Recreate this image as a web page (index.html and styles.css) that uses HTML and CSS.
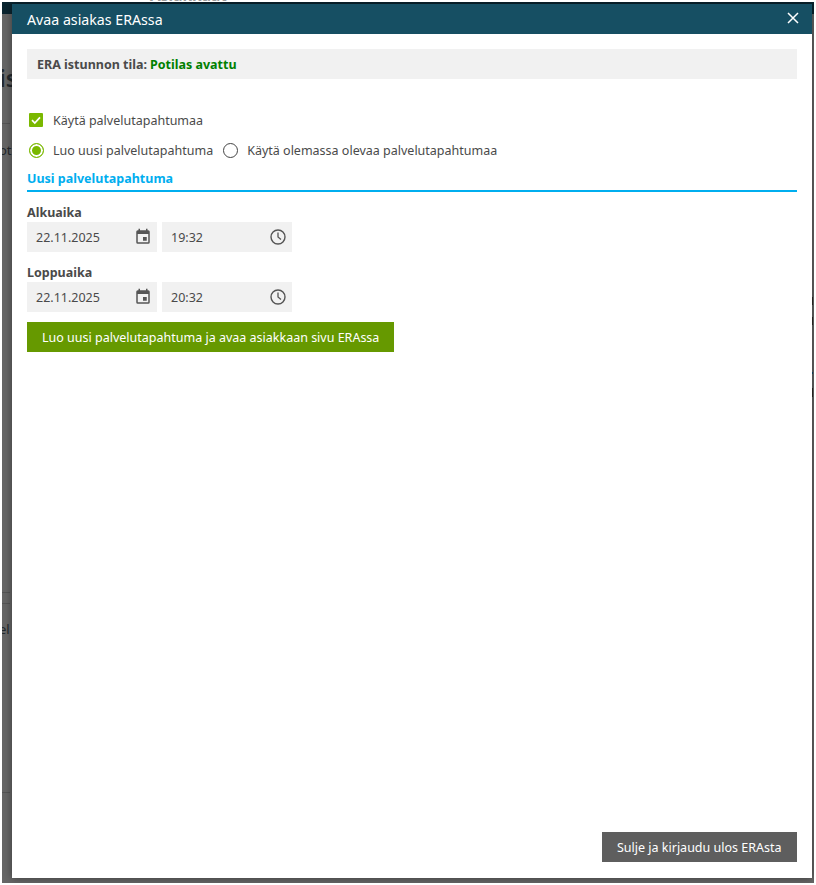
FILE: index.html
```html
<!DOCTYPE html>
<html lang="fi">
<head>
<meta charset="utf-8">
<title>Avaa asiakas ERAssa</title>
<link rel="stylesheet" href="styles.css">
</head>
<body>
<span class="ghost ghost-top">Asiakkaat</span>
<div class="backdrop">
  <div class="topbar"></div>
  <span class="ghost ghost-is">is</span>
  <span class="ghost ghost-ot">ot</span>
  <span class="ghost ghost-el">el</span>
  <i class="rule rule-a"></i><i class="rule rule-b"></i><i class="rule rule-c"></i><i class="rule rule-d"></i>
  <i class="mark mark-a"></i><i class="mark mark-b"></i><i class="mark mark-c"></i><i class="mark mark-d"></i>
  <section class="dialog">
    <header class="dialog-head">
      <h1 class="dialog-title">Avaa asiakas ERAssa</h1>
      <svg class="close" width="12" height="12" viewBox="0 0 12 12"><path d="M1 1l10 10M11 1L1 11" stroke="#fff" stroke-width="1.5" fill="none"/></svg>
    </header>
    <div class="dialog-body">
      <div class="status"><b>ERA istunnon tila:</b> <b class="ok">Potilas avattu</b></div>
      <div class="option-row first">
        <span class="check"><svg width="14" height="14" viewBox="0 0 14 14"><path d="M3 7.2l2.8 2.8L11 4.4" stroke="#fff" stroke-width="1.7" fill="none"/></svg></span>
        <span>Käytä palvelutapahtumaa</span>
      </div>
      <div class="option-row">
        <span class="radio on"></span><span class="radio-label">Luo uusi palvelutapahtuma</span>
        <span class="radio"></span><span>Käytä olemassa olevaa palvelutapahtumaa</span>
      </div>
      <h2 class="section">Uusi palvelutapahtuma</h2>
      <div class="field-label">Alkuaika</div>
      <div class="pickers">
        <div class="input"><span>22.11.2025</span>
          <svg class="ico" width="18" height="18" viewBox="0 0 24 24"><path fill="#555" d="M19 3h-1V1h-2v2H8V1H6v2H5a2 2 0 0 0-2 2v14a2 2 0 0 0 2 2h14a2 2 0 0 0 2-2V5a2 2 0 0 0-2-2zm0 16H5V8h14zM12 12h5v5h-5z"/></svg></div>
        <div class="input"><span>19:32</span>
          <svg class="ico" width="18" height="18" viewBox="0 0 18 18"><circle cx="9" cy="9" r="7" fill="none" stroke="#555" stroke-width="1.4"/><path d="M9 4.6V9l3 2.4" fill="none" stroke="#555" stroke-width="1.3"/></svg></div>
      </div>
      <div class="field-label second">Loppuaika</div>
      <div class="pickers">
        <div class="input"><span>22.11.2025</span>
          <svg class="ico" width="18" height="18" viewBox="0 0 24 24"><path fill="#555" d="M19 3h-1V1h-2v2H8V1H6v2H5a2 2 0 0 0-2 2v14a2 2 0 0 0 2 2h14a2 2 0 0 0 2-2V5a2 2 0 0 0-2-2zm0 16H5V8h14zM12 12h5v5h-5z"/></svg></div>
        <div class="input"><span>20:32</span>
          <svg class="ico" width="18" height="18" viewBox="0 0 18 18"><circle cx="9" cy="9" r="7" fill="none" stroke="#555" stroke-width="1.4"/><path d="M9 4.6V9l3 2.4" fill="none" stroke="#555" stroke-width="1.3"/></svg></div>
      </div>
      <button class="btn primary">Luo uusi palvelutapahtuma ja avaa asiakkaan sivu ERAssa</button>
      <div class="footer"><button class="btn secondary">Sulje ja kirjaudu ulos ERAsta</button></div>
    </div>
  </section>
</div>
</body>
</html>
```
FILE: styles.css
```css
* { box-sizing: border-box; }
html, body { margin: 0; height: 100%; background: #fff; overflow: hidden; }
body { font-family: "Noto Sans", "Open Sans", sans-serif; color: #4a4a4a; font-size: 12.5px; }
.backdrop { position: absolute; left: 2px; top: 2px; width: 812px; height: 881px; background: #666; overflow: hidden; }
.topbar { height: 12px; background: #0a2530; }
.ghost { position: absolute; color: #23282c; font-weight: 600; white-space: nowrap; }
.ghost-top { left: 150px; top: -14px; color: #9a9a9a; font-size: 15.5px; font-weight: 700; line-height: 18px; }
.ghost-is { left: -3px; top: 60px; font-size: 24px; line-height: 32px; }
.ghost-ot { left: -3px; top: 139px; font-size: 13px; font-weight: 400; line-height: 18px; }
.ghost-el { left: -3px; top: 618px; font-size: 13px; font-weight: 400; line-height: 18px; }
.rule { position: absolute; left: 0; width: 8px; height: 1px; background: #555; }
.rule-a { top: 121px; }
.rule-b { top: 590px; }
.rule-c { top: 601px; }
.rule-d { top: 790px; }
.mark { position: absolute; left: 810px; width: 1px; background: #2e2a26; }
.mark-a { top: 295px; height: 8px; }
.mark-b { top: 315px; height: 8px; }
.mark-c { top: 370px; height: 2px; background: #0f4a6b; }
.mark-d { top: 386px; height: 9px; }
.dialog { position: absolute; left: 10px; top: 2px; width: 800px; height: 874px; background: #fff; display: flex; flex-direction: column; box-shadow: 0 0 8px rgba(0, 0, 0, .45); }
.dialog-head { height: 30px; flex: none; background: #164f63; color: #fff; display: flex; align-items: center; justify-content: space-between; padding: 0 13px 2px 15px; }
.dialog-title { margin: 2px 0 0; font-size: 14.2px; font-weight: 400; }
.dialog-body { flex: 1; display: flex; flex-direction: column; align-items: flex-start; padding: 15px 15px 16px; }
.status { align-self: stretch; height: 30px; background: #f1f1f1; padding-left: 10px; display: flex; align-items: center; gap: 3px; }
.ok { color: #008000; }
.option-row { height: 30px; display: flex; align-items: center; }
.option-row.first { margin-top: 26px; }
.check { width: 14px; height: 14px; margin: 0 10px 0 2px; background: #7ab800; border-radius: 1px; display: flex; }
.radio { width: 15px; height: 15px; border: 1.5px solid #444; border-radius: 50%; margin: 0 9px 0 2px; background: #fff; }
.radio.on { border-color: #7ab800; background: #7ab800; box-shadow: inset 0 0 0 2px #fff; }
.radio-label { margin-right: 8px; }
.section { align-self: stretch; margin: 0 0 10px; height: 27px; font-size: 12.5px; font-weight: 700; color: #00aeef; border-bottom: 2px solid #00aeef; line-height: 27px; }
.field-label { font-weight: 700; line-height: 20px; height: 20px; padding-top: 1px; }
.field-label.second { margin-top: 10px; }
.pickers { display: flex; gap: 5px; }
.input { width: 130px; height: 30px; background: #f1f1f1; padding: 0 5px 0 9px; display: flex; align-items: center; justify-content: space-between; }
.btn { border: 0; color: #fff; font: inherit; height: 30px; padding: 0 15px; }
.primary { margin-top: 10px; background: #669900; }
.footer { margin-top: auto; align-self: flex-end; }
.secondary { background: #5e5e5e; padding: 0 15.5px; }
```
